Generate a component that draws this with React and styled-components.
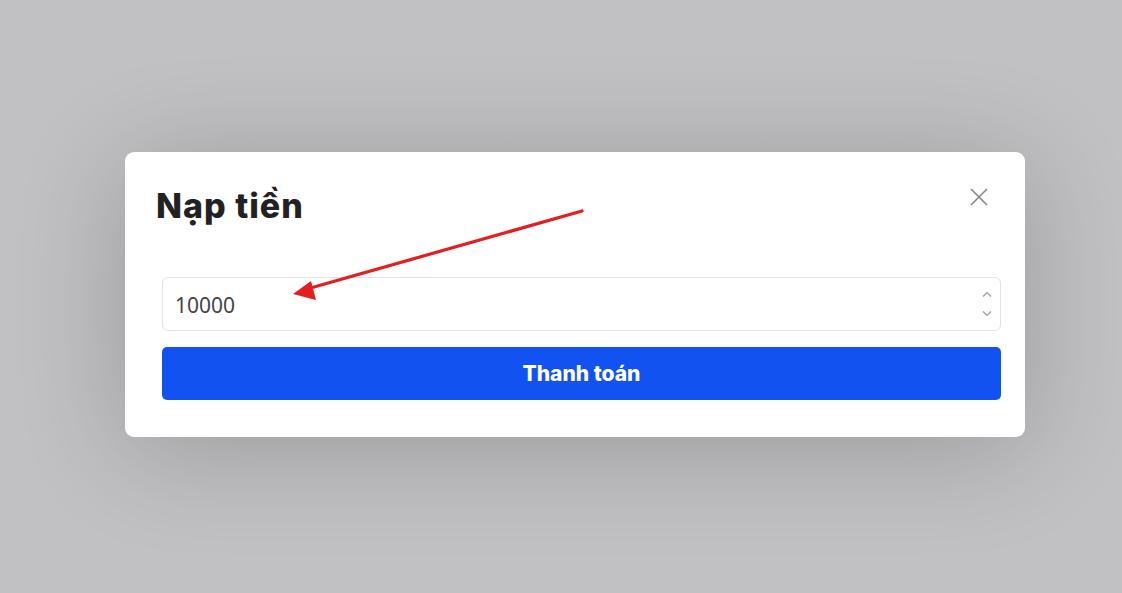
import React from "react";
import styled, { createGlobalStyle } from "styled-components";

const Global = createGlobalStyle`
  html, body { margin: 0; padding: 0; }
  body { background: #c1c1c3; font-family: "Inter", "Noto Sans", sans-serif; }
  * { box-sizing: border-box; }
`;

const Overlay = styled.div`
  width: 1122px;
  height: 593px;
  display: flex;
  justify-content: flex-start;
  padding: 152px 0 0 125px;
  background: #c1c1c3;
`;

const Modal = styled.div`
  position: relative;
  width: 900px;
  height: 285px;
  background: #ffffff;
  border-radius: 9px;
  box-shadow: 0 12px 110px rgba(0, 0, 0, 0.2);
  padding: 30px 24px 37px 37px;
  display: flex;
  flex-direction: column;
`;

const Header = styled.div`
  display: flex;
  justify-content: space-between;
  align-items: flex-start;
  margin-left: -6px;
  height: 96px;
`;

const Title = styled.h2`
  margin: 0;
  font-family: "Inter", sans-serif;
  font-weight: 800;
  font-size: 34px;
  line-height: 48px;
  color: #222;
  letter-spacing: 1px;
`;

const CloseBtn = styled.button`
  border: 0;
  background: transparent;
  padding: 0;
  width: 24px;
  height: 24px;
  margin-top: 3px;
  margin-right: 10px;
  display: flex;
  align-items: center;
  justify-content: center;
  cursor: pointer;
`;

const Body = styled.div`
  display: flex;
  flex-direction: column;
  gap: 16px;
  width: 839px;
`;

const InputBox = styled.div`
  height: 54px;
  border: 1px solid #e3e3e5;
  border-radius: 6px;
  display: flex;
  align-items: center;
  padding: 0 8px 0 12px;
`;

const Value = styled.span`
  flex: 1;
  font-family: "Noto Sans", sans-serif;
  font-size: 21px;
  color: #444;
  padding-top: 1px;
`;

const Spinner = styled.div`
  display: flex;
  flex-direction: column;
  gap: 14px;
  align-items: center;
`;

const PayButton = styled.button`
  height: 53px;
  border: 0;
  border-radius: 5px;
  background: #1152f1;
  color: #fff;
  font-family: "Inter", sans-serif;
  font-weight: 800;
  font-size: 21px;
  cursor: pointer;
`;

const Annotation = styled.svg`
  position: absolute;
  left: 0;
  top: 0;
  pointer-events: none;
`;

export default function App() {
  return (
    <>
      <Global />
      <Overlay>
        <Modal>
          <Header>
            <Title>Nạp tiền</Title>
            <CloseBtn aria-label="close">
              <svg width="18" height="18" viewBox="0 0 18 18">
                <path d="M1 1 L17 17 M17 1 L1 17" stroke="#858585" strokeWidth="1.6" fill="none" />
              </svg>
            </CloseBtn>
          </Header>
          <Body>
            <InputBox>
              <Value>10000</Value>
              <Spinner>
                <svg width="10" height="6" viewBox="0 0 10 6">
                  <path d="M1 5.5 L5 1.5 L9 5.5" stroke="#9a9a9a" strokeWidth="1.2" fill="none" />
                </svg>
                <svg width="10" height="6" viewBox="0 0 10 6">
                  <path d="M1 0.5 L5 4.5 L9 0.5" stroke="#9a9a9a" strokeWidth="1.2" fill="none" />
                </svg>
              </Spinner>
            </InputBox>
            <PayButton>Thanh toán</PayButton>
          </Body>
          <Annotation width="900" height="285" viewBox="0 0 900 285">
            <line x1="457" y1="59" x2="182" y2="137" stroke="#e21e1e" strokeWidth="3.2" strokeLinecap="round" />
            <polygon points="168,142 186,129 191,148" fill="#e21e1e" />
          </Annotation>
        </Modal>
      </Overlay>
    </>
  );
}
